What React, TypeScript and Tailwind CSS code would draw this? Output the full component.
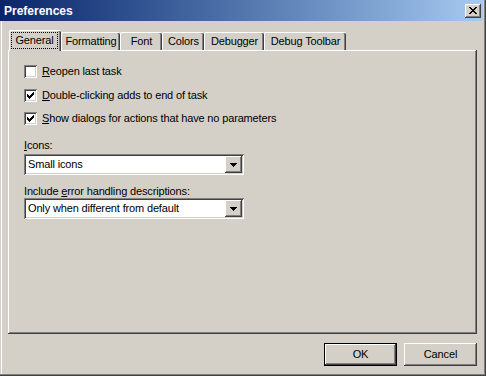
import React from "react"

const raised = "shadow-[inset_-1px_-1px_#404040,inset_1px_1px_#ffffff,inset_-2px_-2px_#808080]"
const sunken = "shadow-[inset_1px_1px_#808080,inset_-1px_-1px_#ffffff,inset_2px_2px_#404040,inset_-2px_-2px_#d4d0c8]"

const tabs = [
  { label: "General", width: "w-[52px]" },
  { label: "Formatting", width: "w-[59px]" },
  { label: "Font", width: "w-[42px]" },
  { label: "Colors", width: "w-[42px]" },
  { label: "Debugger", width: "w-[60px]" },
  { label: "Debug Toolbar", width: "w-[82px]" },
]

function CloseGlyph() {
  return (
    <svg width="8" height="7" viewBox="0 0 8 7" shapeRendering="crispEdges" fill="#000">
      <rect x="0" y="0" width="2" height="1" />
      <rect x="6" y="0" width="2" height="1" />
      <rect x="1" y="1" width="2" height="1" />
      <rect x="5" y="1" width="2" height="1" />
      <rect x="2" y="2" width="4" height="1" />
      <rect x="3" y="3" width="2" height="1" />
      <rect x="2" y="4" width="4" height="1" />
      <rect x="1" y="5" width="2" height="1" />
      <rect x="5" y="5" width="2" height="1" />
      <rect x="0" y="6" width="2" height="1" />
      <rect x="6" y="6" width="2" height="1" />
    </svg>
  )
}

function Check() {
  return (
    <svg width="7" height="7" viewBox="0 0 7 7" shapeRendering="crispEdges" fill="#000">
      <rect x="6" y="0" width="1" height="1" />
      <rect x="5" y="1" width="2" height="1" />
      <rect x="0" y="2" width="1" height="1" />
      <rect x="4" y="2" width="3" height="1" />
      <rect x="0" y="3" width="2" height="1" />
      <rect x="3" y="3" width="3" height="1" />
      <rect x="0" y="4" width="5" height="1" />
      <rect x="1" y="5" width="3" height="1" />
      <rect x="2" y="6" width="1" height="1" />
    </svg>
  )
}

function DownArrow() {
  return (
    <svg width="7" height="4" viewBox="0 0 7 4" shapeRendering="crispEdges" fill="#000">
      <rect x="0" y="0" width="7" height="1" />
      <rect x="1" y="1" width="5" height="1" />
      <rect x="2" y="2" width="3" height="1" />
      <rect x="3" y="3" width="1" height="1" />
    </svg>
  )
}

function CheckRow({ checked, hotkey, rest, className }: { checked: boolean; hotkey: string; rest: string; className?: string }) {
  return (
    <div className={`flex items-center h-[13px] ${className ?? ""}`}>
      <div className={`w-[13px] h-[13px] bg-white shrink-0 pl-[3px] pt-[3px] ${sunken}`}>
        {checked && <Check />}
      </div>
      <span className="ml-[5px] leading-[13px] whitespace-nowrap">
        <u>{hotkey}</u>
        {rest}
      </span>
    </div>
  )
}

function Combo({ value, className }: { value: string; className?: string }) {
  return (
    <div className={`w-[220px] h-[21px] bg-white flex items-center justify-between pl-[4px] pr-[2px] ${sunken} ${className ?? ""}`}>
      <span className="leading-[13px] whitespace-nowrap">{value}</span>
      <div className={`w-[17px] h-[17px] bg-[#d4d0c8] pl-[5px] pt-[7px] ${raised}`}>
        <DownArrow />
      </div>
    </div>
  )
}

export default function App() {
  return (
    <div className="w-[486px] h-[376px] bg-[#d4d0c8] flex flex-col text-[11px] text-black tracking-[-0.15px] font-['Liberation_Sans',Arial,sans-serif] shadow-[inset_-1px_-1px_#404040,inset_-2px_-2px_#808080,inset_1px_0_#d4d0c8,inset_2px_0_#ffffff]">
      {/* Title bar */}
      <div className="h-[21px] w-[483px] bg-linear-to-r from-[#0a246a] to-[#a6caf0] flex items-center justify-between pl-[4px] pr-[2px]">
        <span className="text-white font-bold text-[12px] tracking-normal leading-[14px]">Preferences</span>
        <div className={`w-[16px] h-[14px] bg-[#d4d0c8] pl-[4px] pt-[3px] ${raised}`}>
          <CloseGlyph />
        </div>
      </div>

      {/* Tabs */}
      <div className="mt-[9px] ml-[9px] flex items-start h-[20px] relative z-10">
        {tabs.map((tab, i) =>
          i === 0 ? (
            <div
              key={tab.label}
              className={`${tab.width} h-[21px] bg-[#d4d0c8] border-t border-l border-white rounded-t-[2px] shadow-[inset_-1px_0_#404040,inset_-2px_0_#808080] pt-[1px] pl-[1px] pr-[3px] pb-[2px]`}
            >
              <div className="h-full border border-dotted border-black flex items-center justify-center leading-[13px]">
                {tab.label}
              </div>
            </div>
          ) : (
            <div
              key={tab.label}
              className={`${tab.width} mt-[2px] h-[18px] bg-[#d4d0c8] border-t border-l border-white rounded-t-[2px] shadow-[inset_-1px_0_#404040,inset_-2px_0_#808080] flex items-center justify-center leading-[13px] whitespace-nowrap`}
            >
              {tab.label}
            </div>
          )
        )}
      </div>

      {/* Tab panel */}
      <div className={`ml-[8px] w-[469px] h-[284px] pt-[15px] pl-[16px] flex flex-col ${raised}`}>
        <CheckRow checked={false} hotkey="R" rest="eopen last task" />
        <CheckRow checked hotkey="D" rest="ouble-clicking adds to end of task" className="mt-[11px]" />
        <CheckRow checked hotkey="S" rest="how dialogs for actions that have no parameters" className="mt-[10px]" />

        <div className="mt-[14px] leading-[13px]">
          <u>I</u>cons:
        </div>
        <Combo value="Small icons" className="mt-[2px]" />

        <div className="mt-[10px] leading-[13px]">
          Include <u>e</u>rror handling descriptions:
        </div>
        <Combo value="Only when different from default" className="mt-[0px]" />
      </div>

      {/* Buttons */}
      <div className="mt-[9px] flex justify-end gap-[7px] pr-[9px]">
        <div className="w-[73px] h-[23px] border border-black bg-[#d4d0c8]">
          <div className={`w-full h-full flex items-center justify-center leading-[13px] ${raised}`}>OK</div>
        </div>
        <div className={`w-[73px] h-[23px] bg-[#d4d0c8] flex items-center justify-center leading-[13px] ${raised}`}>
          Cancel
        </div>
      </div>
    </div>
  )
}
